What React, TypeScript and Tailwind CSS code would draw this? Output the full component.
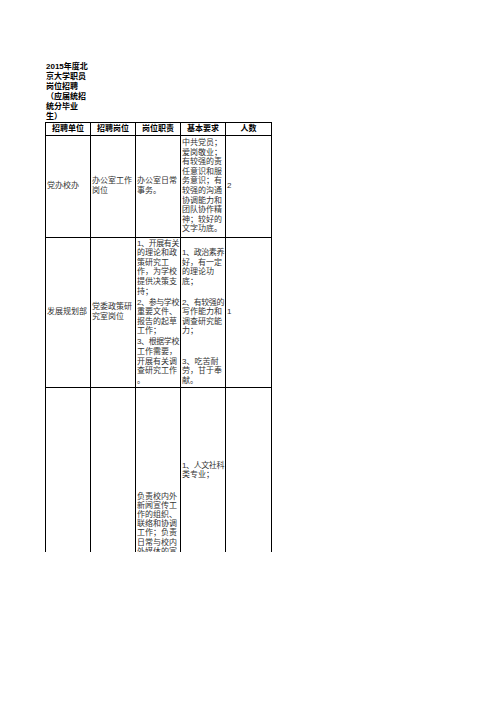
import React from "react";

type Cell = {
  paras: string[][];
  align?: "center" | "top";
  pt?: string;
  leading?: string;
};

const font = { fontFamily: '"Liberation Sans", "Noto Sans CJK SC", sans-serif' };

const title = ["2015年度北", "京大学职员", "岗位招聘", "（应届统招", "统分毕业", "生）"];

const headers = ["招聘单位", "招聘岗位", "岗位职责", "基本要求", "人数"];

const blank = "\u00a0";

const row1: Cell[] = [
  { paras: [["党办校办"]] },
  { paras: [["办公室工作", "岗位"]] },
  { paras: [["办公室日常", "事务。"]] },
  {
    paras: [
      [
        "中共党员；",
        "爱岗敬业；",
        "有较强的责",
        "任意识和服",
        "务意识；有",
        "较强的沟通",
        "协调能力和",
        "团队协作精",
        "神；较好的",
        "文字功底。",
      ],
    ],
  },
  { paras: [["2"]] },
];

const row2: Cell[] = [
  { paras: [["发展规划部"]] },
  { paras: [["党委政策研", "究室岗位"]] },
  {
    paras: [
      ["1、开展有关", "的理论和政", "策研究工", "作，为学校", "提供决策支", "持；"],
      ["2、参与学校", "重要文件、", "报告的起草", "工作；"],
      ["3、根据学校", "工作需要，", "开展有关调", "查研究工作", "。"],
    ],
  },
  {
    paras: [
      [blank, "1、政治素养", "好，有一定", "的理论功", "底；", blank],
      ["2、有较强的", "写作能力和", "调查研究能", "力；"],
      [blank, blank, "3、吃苦耐", "劳，甘于奉", "献。"],
    ],
  },
  { paras: [["1"]] },
];

// last row runs past the bottom of the page and gets clipped
const row3: Cell[] = [
  { paras: [[blank]], align: "top" },
  { paras: [[blank]], align: "top" },
  {
    paras: [["负责校内外", "新闻宣传工", "作的组织、", "联络和协调", "工作；负责", "日常与校内", "外媒体的宣"]],
    align: "top",
    pt: "pt-[104px]",
    leading: "leading-[9.2px]",
  },
  { paras: [["1、人文社科", "类专业；"]], align: "top", pt: "pt-[73px]" },
  { paras: [[blank]], align: "top" },
];

function Row({ cells, height }: { cells: Cell[]; height: string }) {
  return (
    <div className={`grid grid-cols-[45px_45px_45px_45px_46px] border-b border-black ${height}`}>
      {cells.map((c, i) => (
        <div
          key={i}
          className={`flex border-r border-black px-[1px] ${c.align === "top" ? "items-start" : "items-center"} ${c.pt ?? ""}`}
        >
          <div className="flex w-full flex-col gap-[1.5px]">
            {c.paras.map((p, j) => (
              <div key={j} className={`${c.leading ?? "leading-[9.6px]"} whitespace-nowrap`}>
                {p.map((line, k) => (
                  <div key={k} className={line.length > 5 ? "tracking-[-0.4px]" : ""}>
                    {line}
                  </div>
                ))}
              </div>
            ))}
          </div>
        </div>
      ))}
    </div>
  );
}

export default function App() {
  return (
    <div className="h-[702px] w-[496px] overflow-hidden bg-white text-[8px] text-[#333333]" style={font}>
      {/* Title */}
      <div className="pl-[46px] pt-[61.5px] font-bold leading-[10px] text-black">
        {title.map((t) => (
          <div key={t}>{t}</div>
        ))}
      </div>

      {/* Table */}
      <div className="ml-[45px] h-[430px] w-[227px] overflow-hidden border-l border-t border-black">
        <div className="grid h-[13px] grid-cols-[45px_45px_45px_45px_46px] border-b border-black">
          {headers.map((h) => (
            <div key={h} className="flex items-center justify-center border-r border-black font-bold leading-[12px] text-black">
              {h}
            </div>
          ))}
        </div>
        <Row cells={row1} height="h-[102px]" />
        <Row cells={row2} height="h-[150px]" />
        <Row cells={row3} height="h-[400px]" />
      </div>
    </div>
  );
}
